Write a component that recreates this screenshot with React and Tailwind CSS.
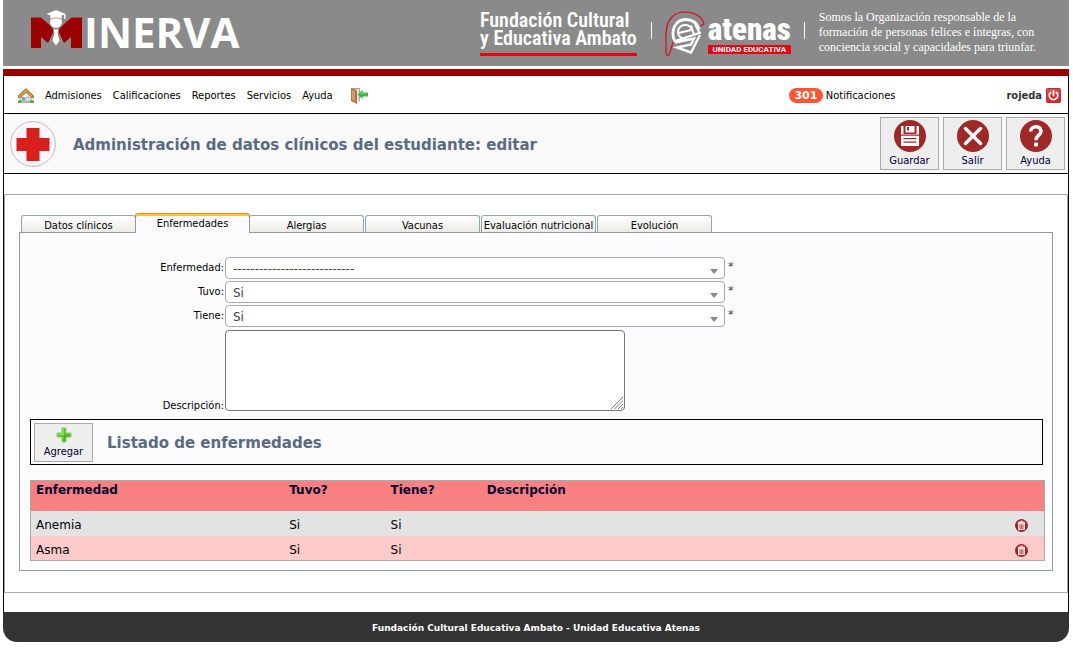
const MENU = ["Admisiones", "Calificaciones", "Reportes", "Servicios", "Ayuda"];

const TABS = [
  { label: "Datos clínicos", gap: "" },
  { label: "Enfermedades", gap: "-ml-px", active: true },
  { label: "Alergias", gap: "-ml-px" },
  { label: "Vacunas", gap: "ml-px" },
  { label: "Evaluación nutricional", gap: "ml-px" },
  { label: "Evolución", gap: "ml-px" },
];

const FIELDS = [
  { id: "enfermedad", label: "Enfermedad:", value: "----------------------------" },
  { id: "tuvo", label: "Tuvo:", value: "Si" },
  { id: "tiene", label: "Tiene:", value: "Si" },
];

const ROWS = [
  { name: "Anemia", had: "Si", has: "Si", bg: "bg-[#e3e3e3]" },
  { name: "Asma", had: "Si", has: "Si", bg: "bg-[#fdcaca]" },
];

function MinervaLogo() {
  return (
    <div className="flex items-end text-white" aria-label="Minerva" role="img">
      <svg className="h-[42px] w-[54px]" viewBox="0 0 54 42">
        <path fill="#9b0000" d="M1 7.500h10l8 7 5 5.500-3 7-3 6-7-6v11H1z" />
        <path fill="#9b0000" d="M52 7.500H41.500L33.500 14.500 28 20l3 7 3 6 7-6v11h11z" />
        <circle cx="26" cy="12" r="6" fill="#fff" />
        <path fill="#fff" d="M26 0l-9.500 4 4 1.600V9h11V5.600L34 4.800V9h1.500V4z" />
        <path stroke="#8a8a8a" strokeWidth="0.800" fill="none" d="M20.500 9q5.500-2.500 11 0" />
        <path fill="#fff" d="M23 19.500h6L27.500 23l2 8-3.500 4.500-3.500-4.500 2-8z" />
        <path fill="none" stroke="#aaa" strokeWidth="0.600" strokeDasharray="1.500 1.500" d="M17.500 33v5M34 37h5" />
      </svg>
      <span className="h-[42px] font-['Open_Sans',sans-serif] text-[42px] leading-[43px] font-bold">INERVA</span>
    </div>
  );
}

function HelmetIcon() {
  return (
    <svg className="h-[46px] w-[41px]" viewBox="0 0 41 46" fill="none">
      <path stroke="#e30613" strokeWidth="1.200" d="M1 43V24C1 8 9 1 20 1c9 0 17 4 19 12l-4 2M1 43c2 3 3 1 4-2l4-13" />
      <path stroke="#fff" strokeWidth="2.800" d="M10 31C5 20 10 8.500 21 8.500c7 0 11 4 13.500 10" />
      <path stroke="#fff" strokeWidth="2" d="M22 26c-4 3-9 0-9-5 0-4 3-7 7-7s6 2 6.500 5L13.500 22" />
      <path stroke="#fff" strokeWidth="2" d="M26 14.500l3 9M30 13l4 8M10 30l26-8.500" />
      <path stroke="#fff" strokeWidth="2.400" d="M10 31.500l19-4-3 6-14 3 14 5L35 24" />
    </svg>
  );
}

function HomeIcon() {
  return (
    <svg className="size-4" viewBox="0 0 16 16">
      <path fill="#fff" stroke="#888" strokeWidth="0.8" d="M3 7l5-5 5 5v7H3z" />
      <path fill="#77a7d8" d="M4 9h3v4H4z" />
      <path fill="#eee" stroke="#777" strokeWidth="0.6" d="M8 9h3v5H8z" />
      <path fill="#d39a48" stroke="#8b5a1b" strokeWidth="0.7" d="M8 .6L.5 7.600v2.200h1.800L8 4.600l5.700 5.200h1.800V7.600z" />
      <path fill="#57ad3a" d="M0 13q2-2 3 0h1v2H0zM12 13q2-2 4 0v2h-4z" />
      <path fill="#a8a8a8" d="M3 14h9v1H3z" />
    </svg>
  );
}

function DoorIcon() {
  return (
    <svg className="h-4 w-[17px]" viewBox="0 0 17 16">
      <path fill="#a9a397" d="M0 0h9v13H0z" />
      <path fill="#e6e2d8" d="M5 1h3v12H5z" />
      <path fill="#b8743c" d="M0 0l6 2.500V16l-6-3z" />
      <path fill="#d69a62" d="M1 2l3 1.300V13l-3-1.500z" />
      <path fill="#3cb54a" d="M6.500 6.500L11.500 2v2.500H17v4h-5.500V11z" />
      <path fill="#7ed67a" d="M9 6l2-2v1.500h5V6z" />
    </svg>
  );
}

function PowerIcon() {
  return (
    <svg className="size-[15px]" viewBox="0 0 15 15">
      <rect x="0.500" y="0.500" width="14" height="14" rx="1" fill="#d52a2a" stroke="#b53030" />
      <path fill="#e86060" d="M1 1h13v5Q7 6 1 9z" opacity="0.5" />
      <path fill="none" stroke="#fff" strokeWidth="1.800" strokeLinecap="round" d="M4.500 4.500a4.200 4.200 0 1 0 6 0M7.500 2.800v4.700" />
    </svg>
  );
}

function CrossIcon() {
  return (
    <svg className="size-[46px]" viewBox="0 0 46 46">
      <circle cx="23" cy="23" r="22.400" fill="#fdf5fc" stroke="#b5b5b5" strokeWidth="0.900" />
      <path fill="#d8211d" d="M16.500 7h13v10h10v13h-10v10h-13v-10h-10v-13h10z" />
    </svg>
  );
}

function SaveIcon() {
  return (
    <svg className="size-8" viewBox="0 0 32 32">
      <circle cx="16" cy="16" r="16" fill="#9f2829" />
      <path fill="#fff" d="M7 6h18v20H7z" />
      <path fill="#9f2829" d="M9.500 6h2v6.500h9V6h2v8h-13z" />
      <path fill="#9f2829" d="M13 7h2v3.500h-2zM7 14.500h18v1.200H7zM9.500 18h13v1.300h-13zM9.500 21.500h13v1.300h-13z" />
    </svg>
  );
}

function ExitIcon() {
  return (
    <svg className="size-8" viewBox="0 0 32 32">
      <circle cx="16" cy="16" r="16" fill="#9f2829" />
      <path stroke="#fff" strokeWidth="3.400" strokeLinecap="round" d="M8.500 8.500l15 15M23.500 8.500l-15 15" />
    </svg>
  );
}

function HelpIcon() {
  return (
    <svg className="size-8" viewBox="0 0 32 32">
      <circle cx="16" cy="16" r="16" fill="#9f2829" />
      <path fill="none" stroke="#fff" strokeWidth="3.600" d="M10.600 11.500C10.600 5.500 21 5 21 11.200c0 4-5 4-5 9" />
      <rect x="14" y="22.500" width="4" height="4" rx="1" fill="#fff" />
    </svg>
  );
}

function PlusIcon() {
  return (
    <svg className="size-4" viewBox="0 0 16 16">
      <path fill="#5cc32f" stroke="#8ccf6c" strokeWidth="1" d="M6 1h4v5h5v4h-5v5H6v-5H1V6h5z" />
      <path fill="#8be05c" d="M6.500 2H8v6H2V6.500h4.500z" />
      <path fill="#3aa51b" d="M8 8h6v1.500H9.500V14H8z" opacity="0.6" />
    </svg>
  );
}

function TrashIcon() {
  return (
    <svg className="size-[13px]" viewBox="0 0 13 13">
      <circle cx="6.500" cy="6.500" r="6.500" fill="#a02425" />
      <path fill="#f3d5d5" d="M5.500 1.500h2v1h2l1 2h-.5v6.500H3V4.500h-.5l1-2h2z" />
      <path fill="#c06a6a" d="M4.500 5.500h4v4.500h-4z" />
      <path stroke="#e0a5a5" strokeWidth="0.600" d="M5.500 5.500v4M7.500 5.500v4" />
    </svg>
  );
}

function ToolButton({ icon, label }) {
  return (
    <button
      type="button"
      className="flex h-[53px] w-[59px] flex-col items-center border border-[#aaa] bg-[#eee] pt-[2px] text-[11px] leading-[17px] text-[#000033]"
    >
      {icon}
      <span>{label}</span>
    </button>
  );
}

function SelectField({ id, label, value }) {
  return (
    <div className="flex h-6">
      <label htmlFor={id} className="w-[195px] shrink-0 pr-px text-right leading-[22px]">
        {label}
      </label>
      <div className="relative h-[22px] w-[500px]">
        <select
          id={id}
          className="size-full appearance-none rounded border border-[#aaa] bg-white px-[7px] pt-px font-['DejaVu_Sans',sans-serif] text-xs text-[#444]"
        >
          <option>{value}</option>
        </select>
        <svg className="pointer-events-none absolute right-[7px] bottom-[5px] h-[5px] w-[8px]" viewBox="0 0 8 5">
          <path fill="#888" d="M0 0h8L4 5z" />
        </svg>
      </div>
      <span className="pl-[3px] font-['DejaVu_Sans',sans-serif] leading-5 text-[#333]">*</span>
    </div>
  );
}

export default function App() {
  return (
    <div className="mr-1 ml-[3px] font-['DejaVu_Sans_Condensed','DejaVu_Sans',sans-serif] text-[11px] text-black">
      <header className="flex h-[66px] items-start justify-between bg-[#8a8a8a] text-white">
        <div className="pt-[10px] pl-[27px]">
          <MinervaLogo />
        </div>
        <div className="flex items-start pr-[33px]">
          <div className="mt-[11px] border-b-[3px] border-[#e30613] pb-[6px] font-['Roboto_Condensed','Roboto',sans-serif] text-[20px] leading-[18px] font-semibold">
            <p>Fundación Cultural</p>
            <p>y Educativa Ambato</p>
          </div>
          <div className="mt-[22px] ml-[14px] h-[17px] w-px bg-white" />
          <div className="mt-[11px] ml-[13px]">
            <HelmetIcon />
          </div>
          <div className="mt-[14px] ml-[2px] flex w-[83px] flex-col items-stretch">
            <p className="font-['Roboto_Condensed','Roboto',sans-serif] text-[31px] leading-[31px] font-black">atenas</p>
            <p className="bg-[#e30613] text-center font-['Roboto',sans-serif] text-[8px] leading-[9px] font-bold">
              UNIDAD EDUCATIVA
            </p>
          </div>
          <div className="mt-[22px] ml-[13px] h-[17px] w-px bg-white" />
          <div className="mt-[10px] ml-[14px] font-['Liberation_Serif',serif] text-xs leading-[15px]">
            <p>Somos la Organización responsable de la</p>
            <p>formación de personas felices e íntegras, con</p>
            <p>conciencia social y capacidades para triunfar.</p>
          </div>
        </div>
      </header>

      <div className="mt-[3px] h-[7px] bg-[#9b0000]" />

      <div className="border-x border-black">
        <nav className="flex h-[38px] items-center border-b border-black pt-[2px] pr-[7px] pl-[14px]">
          <a href="#inicio" aria-label="Inicio" className="mr-[11px]">
            <HomeIcon />
          </a>
          <ul className="flex gap-[11px] leading-[18px]">
            {MENU.map((item) => (
              <li key={item}>
                <a href="#menu">{item}</a>
              </li>
            ))}
          </ul>
          <a href="#salir" aria-label="Salir" className="ml-[18px]">
            <DoorIcon />
          </a>
          <a href="#notificaciones" className="ml-auto flex items-center gap-[3px] leading-[18px]">
            <span className="w-[34px] rounded-full bg-[#ff5533] text-center font-['DejaVu_Sans',sans-serif] text-[11px] leading-[15px] font-bold text-white">
              301
            </span>
            Notificaciones
          </a>
          <span className="ml-[111px] leading-[18px] font-bold text-[#333]">rojeda</span>
          <button type="button" aria-label="Cerrar sesión" className="ml-1">
            <PowerIcon />
          </button>
        </nav>

        <div className="flex h-[60px] items-center border-b border-black bg-[#f9f9f9] pr-[3px] pl-[6px]">
          <CrossIcon />
          <h1 className="mt-[2px] ml-[17px] grow font-['DejaVu_Sans',sans-serif] text-[15px] leading-5 font-bold text-[#5a6a82]">
            Administración de datos clínicos del estudiante: editar
          </h1>
          <div className="flex gap-1">
            <ToolButton icon={<SaveIcon />} label="Guardar" />
            <ToolButton icon={<ExitIcon />} label="Salir" />
            <ToolButton icon={<HelpIcon />} label="Ayuda" />
          </div>
        </div>

        <main className="pt-5 pb-[19px]">
          <div className="border border-[#aaa] px-[14px] pt-[18px] pb-[21px]">
            <div role="tablist" className="flex items-end pl-[2px]">
              {TABS.map(({ label, gap, active }) =>
                active ? (
                  <button
                    key={label}
                    type="button"
                    role="tab"
                    aria-selected="true"
                    className={`${gap} relative z-10 -mb-px h-5 w-[115px] rounded-t-[3px] border-x border-t border-x-[#919b9c] border-t-[#e68b2c] bg-[#fcfcfe] pb-px leading-[15px] whitespace-nowrap shadow-[inset_0_2px_0_#ffc03c]`}
                  >
                    {label}
                  </button>
                ) : (
                  <button
                    key={label}
                    type="button"
                    role="tab"
                    aria-selected="false"
                    className={`${gap} h-[17px] w-[115px] rounded-t-[3px] border border-b-0 border-[#91a7b4] bg-linear-to-b from-white to-[#ecebe6] pt-[2px] leading-4 whitespace-nowrap`}
                  >
                    {label}
                  </button>
                ),
              )}
            </div>

            <section className="border border-[#919b9c] bg-[#fcfcfe] pt-6 pr-[7px] pb-[9px] pl-[10px]">
              {FIELDS.map((field) => (
                <SelectField key={field.id} {...field} />
              ))}
              <div className="mt-px flex items-end">
                <label htmlFor="descripcion" className="w-[195px] shrink-0 pr-px text-right leading-[11px]">
                  Descripción:
                </label>
                <div className="relative h-[81px] w-[400px]">
                  <textarea
                    id="descripcion"
                    className="block size-full resize-none rounded border border-[#767676] bg-white"
                  />
                  <svg className="pointer-events-none absolute right-[2px] bottom-[2px] size-3" viewBox="0 0 12 12">
                    <path stroke="#777" strokeWidth="1" d="M0 12L12 0M3.500 12L12 3.500M7 12l5-5M10 12l2-2" />
                  </svg>
                </div>
              </div>

              <div className="mt-2 mr-[2px] flex h-[46px] items-center border border-black px-[3px]">
                <button
                  type="button"
                  className="flex h-[39px] w-[59px] flex-col items-center border border-[#aaa] bg-[#eee] pt-[3px] leading-[18px] text-[#000033]"
                >
                  <PlusIcon />
                  <span>Agregar</span>
                </button>
                <h2 className="mt-[2px] ml-[14px] font-['DejaVu_Sans',sans-serif] text-[15px] leading-5 font-bold text-[#5a6a82]">
                  Listado de enfermedades
                </h2>
              </div>

              <div className="mt-[15px] border border-[#aaa]">
                <table className="w-full table-fixed text-left font-['DejaVu_Sans',sans-serif] text-xs">
                  <colgroup>
                    <col className="w-[25%]" />
                    <col className="w-[10%]" />
                    <col className="w-[9.500%]" />
                    <col />
                    <col className="w-[34px]" />
                  </colgroup>
                  <thead className="bg-[#f88080] text-[#000033]">
                    <tr className="h-[30px] align-top">
                      <th scope="col" className="pl-[5px] leading-[19px]">Enfermedad</th>
                      <th scope="col" className="pl-[5px] leading-[19px]">Tuvo?</th>
                      <th scope="col" className="pl-[5px] leading-[19px]">Tiene?</th>
                      <th scope="col" className="pl-[5px] leading-[19px]">Descripción</th>
                      <td />
                    </tr>
                  </thead>
                  <tbody>
                    {ROWS.map((row) => (
                      <tr key={row.name} className={`${row.bg} h-[25px] align-top last:h-6`}>
                        <td className="pt-[6px] pl-[5px] leading-4">{row.name}</td>
                        <td className="pt-[6px] pl-[5px] leading-4">{row.had}</td>
                        <td className="pt-[6px] pl-[5px] leading-4">{row.has}</td>
                        <td />
                        <td className="pt-2 pl-[5px]">
                          <button type="button" aria-label={`Eliminar ${row.name}`} className="block">
                            <TrashIcon />
                          </button>
                        </td>
                      </tr>
                    ))}
                  </tbody>
                </table>
              </div>
            </section>
          </div>
        </main>
      </div>

      <footer className="h-[30px] rounded-b-[14px] bg-[#333] text-center font-['DejaVu_Sans',sans-serif] text-[9px] leading-8 font-bold text-white">
        Fundación Cultural Educativa Ambato - Unidad Educativa Atenas
      </footer>
    </div>
  );
}
